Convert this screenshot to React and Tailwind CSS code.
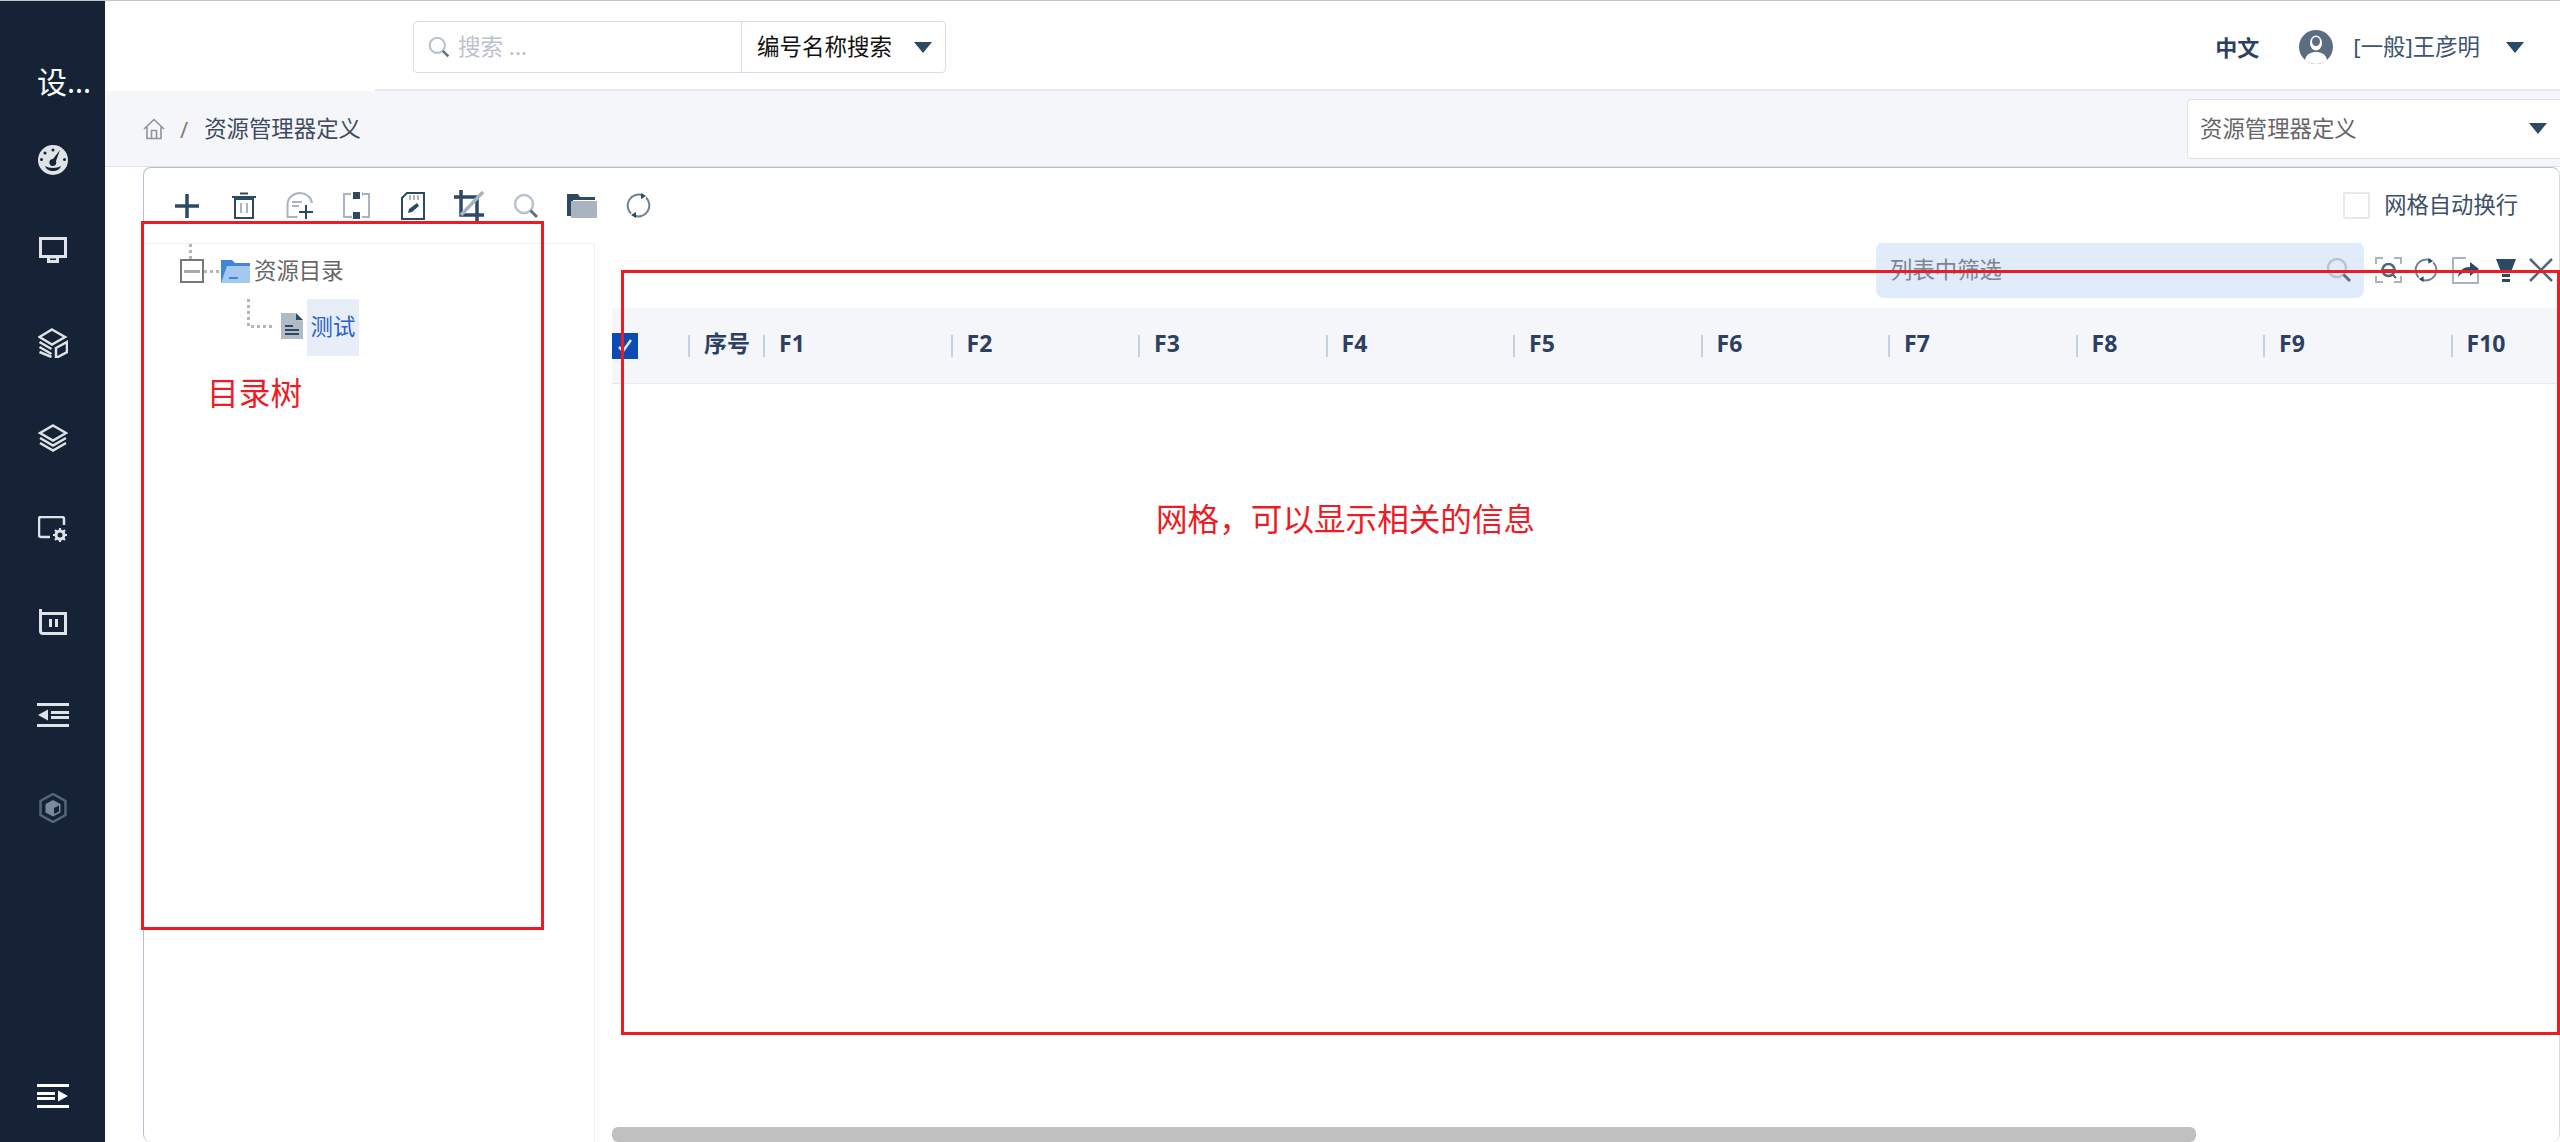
import React from 'react';

const FONT = "font-['Noto_Sans','Noto_Sans_CJK_SC',sans-serif]";
const DARK = '#2c4a63';
const GRAY = '#aab4bf';

// small wrapper so the svg sizes stay readable below
function Ic({ w = 30, h = 30, className = '', children }) {
  return (
    <svg width={w} height={h} viewBox={`0 0 ${w} ${h}`} fill="none" className={`block shrink-0 ${className}`}>
      {children}
    </svg>
  );
}

const C = '#dfe2e6';

const sideIcons = [
  // gauge
  <Ic key="gauge">
    <path fillRule="evenodd" d="M15 0a15 15 0 1 1 0 30a15 15 0 1 1 0-30zM15 3.500a1.500 1.500 0 1 0 0 3a1.500 1.500 0 1 0 0-3zM7 6.500a1.500 1.500 0 1 0 0 3a1.500 1.500 0 1 0 0-3zM3.500 13a1.500 1.500 0 1 0 0 3a1.500 1.500 0 1 0 0-3zM26.500 13a1.500 1.500 0 1 0 0 3a1.500 1.500 0 1 0 0-3zM22 5L15 14a3.500 3.500 0 1 0 3 2zM7 21c1 3 4 5 8 5s7-2 8-5c-2 1.200-5 2-8 2s-6-.8-8-2z" fill={C} />
  </Ic>,
  // monitor
  <Ic key="monitor" w={28} h={26} className="-mt-[5px]">
    <path d="M1.500 1.500h25v18h-25z" stroke={C} strokeWidth="3" />
    <path d="M8 20h12v6H8z" fill={C} />
    <path d="M11 21.500h6v1.500h-6z" fill="#162235" />
  </Ic>,
  // layers with a tag
  <Ic key="stack" className="-mt-[4px]">
    <path d="M14 1.500L27 9l-13 7.500L1.500 9z" stroke={C} strokeWidth="2.500" />
    <path d="M1.500 14l12 7M1.500 19l12 7M1.500 24l12 5" stroke={C} strokeWidth="2.500" />
    <path d="M18 20l11-6v10l-11 6z" stroke={C} strokeWidth="2.500" />
  </Ic>,
  // layers
  <Ic key="layers">
    <path d="M15 2.500L28 10l-13 7.500L2 10z" stroke={C} strokeWidth="2.500" />
    <path d="M2 15l13 7.500L28 15M2 20l13 7.500L28 20" stroke={C} strokeWidth="2.500" />
  </Ic>,
  // screen with gear
  <Ic key="gear" w={29} h={27} className="-mt-[2px]">
    <path d="M26 9V3q0-2-2-2H3q-2 0-2 2v16q0 2 2 2h9" stroke={C} strokeWidth="2.500" />
    <circle cx="22" cy="19" r="4" stroke={C} strokeWidth="3" />
    <path d="M22 12v3M22 23v3M15 19h3M26 19h3M17 14l2 2M25 22l2 2M27 14l-2 2M19 22l-2 2" stroke={C} strokeWidth="2.200" />
  </Ic>,
  // blueprint
  <Ic key="plan" w={28} h={27} className="-mt-[3px]">
    <path d="M1.500 1v22q0 2.500 2.500 2.500h22.500V5.500H3" stroke={C} strokeWidth="3" />
    <path d="M10 11h3v8h-3zM16 11h3v8h-3z" fill={C} />
  </Ic>,
];

function Collapse({ flip }) {
  // three bars and a small triangle, mirrored for the bottom button
  return (
    <Ic w={32} h={24}>
      <g fill={flip ? '#fff' : C} transform={flip ? 'translate(32 0) scale(-1 1)' : undefined}>
        <path d="M0 0h32v3H0zM0 21h32v3H0zM14 8h18v3H14zM14 13h18v3H14zM11 6.500v11L1 12z" />
      </g>
    </Ic>
  );
}

function Sidebar() {
  return (
    <aside className="flex w-[105px] shrink-0 flex-col items-center bg-[#162235]">
      <div className="flex h-[113px] w-full items-center pl-[37px] pt-[48px] text-[30px] leading-none text-white">设...</div>
      {sideIcons.map((icon, i) => (
        <div key={i} className="flex h-[92.5px] w-full items-center justify-center">
          {icon}
        </div>
      ))}
      <div className="flex h-[92.5px] w-full items-center justify-center">
        <Collapse />
      </div>
      <div className="flex h-[92.5px] w-full items-center justify-center">
        <Ic>
          <path d="M15 1L27.500 8v14L15 29L2.500 22V8z" stroke="#54657c" strokeWidth="2.500" />
          <path d="M15 7l7.500 4v8.500L15 23.500l-7.500-4V11z" fill="#7b8a9c" />
          <path d="M16 15l5-2.500v6L16 21z" fill="#162235" />
        </Ic>
      </div>
      <div className="mt-auto mb-[34px]">
        <Collapse flip />
      </div>
    </aside>
  );
}

function Caret({ className = '', color = DARK }) {
  return (
    <Ic w={18} h={11} className={className}>
      <path d="M0 0h18L9 11z" fill={color} />
    </Ic>
  );
}

function SearchGlyph({ size = 26, ring = '#b9c3cd', handle = '#5e7082' }) {
  return (
    <svg width={size} height={size} viewBox="0 0 26 26" fill="none" className="block shrink-0">
      <circle cx="11" cy="11" r="9" stroke={ring} strokeWidth="2.500" />
      <path d="M17.500 17.500L24 24" stroke={handle} strokeWidth="3" />
    </svg>
  );
}

function TopBar() {
  return (
    <header className="flex h-[90px] shrink-0 bg-white">
      <div className="w-[270px]" />
      <div className="flex flex-1 items-start border-b-2 border-[#e5eaf1] pl-[38px]">
        <div className="mt-[20px] flex h-[52px] w-[533px] items-center rounded-[4px] border border-[#d5deea]">
          <div className="flex h-full w-[328px] items-center gap-[8px] border-r border-[#d5deea] pl-[14px]">
            <SearchGlyph size={22} />
            <span className="text-[22.500px] leading-none text-[#bcc2cc]">搜索 ...</span>
          </div>
          <span className="ml-[15px] text-[22.500px] leading-none text-[#111]">编号名称搜索</span>
          <Caret className="ml-[22px]" />
        </div>
        <div className="ml-auto mt-[29px] flex items-center">
          <span className="text-[22px] font-bold leading-none text-[#2c4063]">中文</span>
          <svg width="34" height="34" viewBox="0 0 34 34" className="ml-[40px] block">
            <circle cx="17" cy="17" r="17" fill="#5c6d82" />
            <ellipse cx="17" cy="13" rx="6" ry="7.500" fill="#fff" />
            <path d="M6 30c1-6 6-8 11-8s10 2 11 8c-3 2.500-7 4-11 4s-8-1.500-11-4z" fill="#fff" />
            <ellipse cx="17" cy="11.500" rx="4" ry="4.500" fill="#5c6d82" />
          </svg>
          <span className="ml-[20px] text-[22.400px] leading-none text-[#3e5470]">[一般]王彦明</span>
          <Caret className="ml-[26px] mr-[36px]" />
        </div>
      </div>
    </header>
  );
}

function Breadcrumb() {
  return (
    <div className="flex h-[76px] shrink-0 items-center border-b border-[#dfe5ee] bg-[#f5f6fa]">
      <svg width="22" height="22" viewBox="0 0 22 22" fill="none" className="ml-[38px] block">
        <path d="M1 11L11 1.500L21 11M4 9v11.500h14V9M8.500 20.500v-8h5v8" stroke="#8b949f" strokeWidth="1.600" />
      </svg>
      <span className="ml-[15px] text-[22px] leading-none text-[#8d7c68]">/</span>
      <span className="ml-[16px] mt-[2px] text-[22.400px] leading-none text-[#3f4a5e]">资源管理器定义</span>
      <div className="ml-auto flex h-[60px] w-[373px] items-center justify-between rounded-l-[4px] border border-r-0 border-[#dde3ec] bg-white pl-[12px] pr-[13px]">
        <span className="mt-[2px] text-[22.400px] leading-none text-[#666]">资源管理器定义</span>
        <Caret />
      </div>
    </div>
  );
}

function Refresh({ size = 25 }) {
  return (
    <svg width={size} height={size} viewBox="0 0 25 25" fill="none" className="block shrink-0">
      <path d="M5 20.500A11 11 0 0 1 17 2.500" stroke="#6f8091" strokeWidth="2" />
      <path d="M20 4.500A11 11 0 0 1 8 22.500" stroke="#6f8091" strokeWidth="2" />
      <path d="M15 0l5 3-5 3zM10 19l-5 3 5 3z" fill={DARK} />
    </svg>
  );
}

const toolbar = [
  // add
  <Ic key="add" w={24} h={24}>
    <path d="M12 0v24M0 12h24" stroke={DARK} strokeWidth="3.500" />
  </Ic>,
  // delete
  <Ic key="del" w={24} h={28}>
    <path d="M3 7h18v19H3z" stroke={DARK} strokeWidth="2" />
    <path d="M0 5h24M8 1.500h8" stroke={DARK} strokeWidth="2" />
    <path d="M9 11v10M15 11v10" stroke={GRAY} strokeWidth="2" />
  </Ic>,
  // add form
  <Ic key="form" w={27} h={27}>
    <path d="M26 11C25 5 20 1 14 1S2 5 1.500 12v13h10" stroke={GRAY} strokeWidth="2" />
    <path d="M6 10h10M6 14h7" stroke={GRAY} strokeWidth="2" />
    <path d="M20 13v14M13 20h14" stroke={DARK} strokeWidth="2" />
  </Ic>,
  // swap
  <Ic key="swap" w={27} h={27}>
    <path d="M8 2H1v23h8M19 2h7v23h-7" stroke={GRAY} strokeWidth="2" />
    <path d="M10 0h7v7h-7zM10 20h7v7h-7z" fill={DARK} />
    <path d="M19 0l3 2-3 2zM8 23l-3 2 3 2z" fill={GRAY} />
  </Ic>,
  // sd card with pencil
  <Ic key="sd" w={24} h={28}>
    <path d="M6 1h17v26H1V6z" stroke={DARK} strokeWidth="2" />
    <path d="M9 3v5M13 3v5M17 3v5" stroke={GRAY} strokeWidth="2" />
    <path d="M7 21l1-4 8-6 2 3-7 6z" fill={DARK} />
  </Ic>,
  // crop
  <Ic key="crop" w={30} h={32}>
    <path d="M7 0v25h23M0 7h23v25" stroke={DARK} strokeWidth="3.500" />
    <path d="M7 25L29 2" stroke={GRAY} strokeWidth="3.500" />
  </Ic>,
  <SearchGlyph key="find" />,
  // open folder
  <Ic key="folder" w={30} h={24}>
    <path d="M0 0h11l2 3h15v3H6v16H0z" fill={DARK} />
    <path d="M4 7h26v17H4z" fill={GRAY} />
  </Ic>,
  <Refresh key="refresh" />,
];

function CardToolbar() {
  return (
    <div className="flex h-[75px] shrink-0 items-center pl-[15px] pr-[41px]">
      <div className="flex items-center">
        {toolbar.map((icon, i) => (
          <div key={i} className="flex w-[56.400px] items-center justify-center">
            {icon}
          </div>
        ))}
      </div>
      <label className="ml-auto flex items-center gap-[14px]">
        <span className="h-[27px] w-[27px] rounded-[2px] border-2 border-[#e4e9f0] bg-white" />
        <span className="text-[22.300px] leading-none text-[#3b4f68]">网格自动换行</span>
      </label>
    </div>
  );
}

// dotted connector of the tree, 3px squares with 3px spaces
function Dots({ w, h, d, className = '' }) {
  return (
    <svg width={w} height={h} viewBox={`0 0 ${w} ${h}`} fill="none" className={`block shrink-0 ${className}`}>
      <path d={d} stroke="#b5b5b5" strokeWidth="3" strokeDasharray="3 3" />
    </svg>
  );
}

function Tree() {
  return (
    <div className="relative w-[451px] shrink-0 border-t border-r border-[#eff1f4] text-[22.400px] leading-none">
      <Dots w={3} h={15} d="M1.500 0v15" className="ml-[45px]" />
      <div className="ml-[36px] flex items-center">
        <span className="relative flex h-[24px] w-[24px] items-center justify-center border-2 border-[#777]">
          <span className="h-[3px] w-[16px] bg-[#aaa]" />
        </span>
        <Dots w={17} h={3} d="M0 1.500h17" />
        <svg width="29" height="23" viewBox="0 0 29 23" className="block">
          <path d="M0 23V0h11l3 3h15v3H7L4 22z" fill="#3f86d8" />
          <path d="M0 23L6 6h23v17z" fill="#a5c8f0" />
          <path d="M8 18h9" stroke="#3f86d8" strokeWidth="2" />
        </svg>
        <span className="ml-[4px] text-[#666]">资源目录</span>
      </div>
      <div className="mt-[16px] ml-[103px] flex items-start">
        <Dots w={28} h={29} d="M1.500 0v27.500h26.500" />
        <svg width="22" height="26" viewBox="0 0 22 26" className="ml-[6px] mt-[14px] block">
          <path d="M0 0h14l8 8v18H0z" fill="#b1bac5" />
          <path d="M15 0l7 7h-7z" fill="#2c4a63" />
          <path d="M4 13h8M4 17h14M4 21h14" stroke="#2c4a63" strokeWidth="2" />
        </svg>
        <span className="ml-[4px] flex h-[57px] w-[52px] items-center justify-center bg-[#e8eef8] text-[#2a62c8]">测试</span>
      </div>
    </div>
  );
}

const columns = ['F1', 'F2', 'F3', 'F4', 'F5', 'F6', 'F7', 'F8', 'F9', 'F10'];

function HeaderCell({ label, width, pad }) {
  return (
    <div className="flex shrink-0 items-center" style={{ width }}>
      <span className="mt-[5px] h-[22px] w-[2px] bg-[#c3d2df]" />
      <span style={{ marginLeft: pad }}>{label}</span>
    </div>
  );
}

function Grid() {
  return (
    <div className="flex min-w-0 flex-1 flex-col overflow-hidden pl-[17px]">
      <div className="-mt-px flex h-[56px] shrink-0 items-center">
        <div className="ml-auto flex items-center">
          <div className="flex h-[56px] w-[488px] items-center justify-between rounded-[8px] bg-[#e0ebfb] pl-[14px] pr-[12px]">
            <span className="text-[22.400px] leading-none text-[#7c8591]">列表中筛选</span>
            <SearchGlyph />
          </div>
          <div className="ml-[11px] flex items-center pr-[6px]">
            <Ic w={27} h={26}>
              <path d="M1 7V1h7M19 1h7v6M1 19v6h7M19 25h7v-6" stroke={GRAY} strokeWidth="2" />
              <circle cx="13.500" cy="13" r="6" stroke="#51677c" strokeWidth="2.500" />
              <path d="M17 17l4 4M6 13h15" stroke="#51677c" strokeWidth="2" />
            </Ic>
            <div className="ml-[12px]">
              <Refresh size={24} />
            </div>
            <Ic w={27} h={27} className="ml-[14px]">
              <path d="M14 1H1v25h25V14" stroke={GRAY} strokeWidth="2" />
              <path d="M6 20c1-7 6-10 12-10V5l9 7-9 7v-5c-5 0-9 2-12 6z" fill={DARK} />
            </Ic>
            <Ic w={20} h={24} className="ml-[17px]">
              <path d="M0 1h20l-5 13H5z" fill={DARK} />
              <path d="M6 16h8v3H6z" fill={DARK} />
              <path d="M6 21h8v3H6z" fill={DARK} />
            </Ic>
            <Ic w={24} h={24} className="ml-[13px]">
              <path d="M1 1l22 22M23 1L1 23" stroke="#51677c" strokeWidth="2.500" />
            </Ic>
          </div>
        </div>
      </div>
      <div className="mt-[10px] flex h-[76px] w-[2000px] shrink-0 items-center border-b border-[#e5e9f0] bg-[#f5f6fa] pb-[4px] text-[23px] font-bold leading-none text-[#2c4063]">
        <span className="mt-[5px] flex h-[26px] w-[26px] shrink-0 items-center justify-center bg-[#0a4bb5]">
          <svg width="16" height="14" viewBox="0 0 16 14" fill="none" className="block">
            <path d="M2 8l4 4L14 1" stroke="#dce6f5" strokeWidth="2.500" />
          </svg>
        </span>
        <div className="w-[50px] shrink-0" />
        <HeaderCell label="序号" width={75} pad={14} />
        {columns.map((c) => (
          <HeaderCell key={c} label={c} width={187.5} pad={14} />
        ))}
      </div>
      <div className="flex-1" />
      <div className="h-[15px] w-[1584px] shrink-0 rounded-[6px] bg-[#c0c0c0]" />
    </div>
  );
}

export default function App() {
  return (
    <div className={`relative flex h-[1142px] w-[2560px] flex-col overflow-hidden bg-white ${FONT}`}>
      <div className="h-px shrink-0 bg-[#c4c4c4]" />
      <div className="flex min-h-0 flex-1">
        <Sidebar />
        <main className="flex min-w-0 flex-1 flex-col">
          <TopBar />
          <Breadcrumb />
          <div className="ml-[38px] flex min-h-0 flex-1 flex-col rounded-[8px] border border-[#b4bfce] border-b-0 border-r-[#d5dbe4]">
            <CardToolbar />
            <div className="flex min-h-0 flex-1">
              <Tree />
              <Grid />
            </div>
          </div>
        </main>
      </div>

      {/* red notes drawn over the screenshot */}
      <div className="absolute left-[141px] top-[221px] h-[709px] w-[403px] border-[3px] border-[#ed1c24]" />
      <div className="absolute left-[621px] top-[270px] h-[765px] w-[1939px] border-[3px] border-[#ed1c24]" />
      <span className="absolute left-[207px] top-[377px] text-[31.700px] leading-none text-[#ed1c24]">目录树</span>
      <span className="absolute left-[1156px] top-[503px] text-[31.600px] leading-none text-[#ed1c24]">网格，可以显示相关的信息</span>
    </div>
  );
}
